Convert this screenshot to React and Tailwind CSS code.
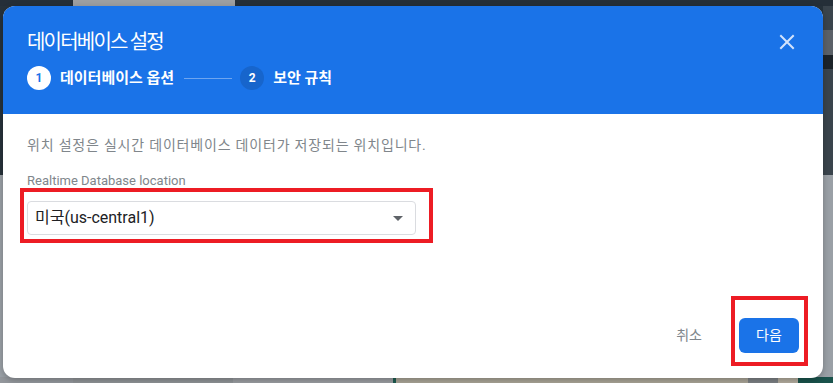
import React from 'react';

const font = { fontFamily: 'Roboto, "Noto Sans CJK KR", sans-serif' };

const Backdrop = () => (
  <div className="flex h-full w-full flex-col">
    <div className="flex h-[6px] bg-[#252f38]">
      <div className="ml-[73px] h-full w-[162px] bg-[#9d9fa1]" />
    </div>
    <div className="flex h-[169px] bg-[#27323a]">
      <div className="flex-1" />
      <div className="flex w-[10px] flex-col">
        <div className="h-[24px] bg-[#3a444c]" />
        <div className="h-[25px] bg-[#5b6168]" />
        <div className="h-[14px] bg-[#1c2329]" />
        <div className="flex-1 bg-[#3a444c]" />
      </div>
    </div>
    <div className="flex flex-1 flex-col bg-[#9aa0a6]">
      <div className="flex-1" />
      <div className="flex h-[6px]">
        <div className="w-[73px] bg-[#93979c]" />
        <div className="w-[160px] bg-[#8e9296]" />
        <div className="w-[160px] bg-[#999ca0]" />
        <div className="w-[3px] bg-[#1c5a4f]" />
        <div className="flex-1 bg-[#a8a396]" />
        <div className="w-[30px] bg-[#7b7f83]" />
        <div className="w-[20px] bg-[#b1aa9c]" />
        <div className="w-[35px] bg-[#19524b]" />
      </div>
    </div>
  </div>
);

const Step = ({ num, label, active }) => (
  <div className="flex items-center gap-[9px]">
    <div
      className={`flex h-6 w-6 items-center justify-center rounded-full text-[12px] font-bold ${
        active ? 'bg-white text-[#1a73e8]' : 'bg-[#1765cc] text-white'
      }`}
    >
      {num}
    </div>
    <span className="text-[15px] font-bold leading-5 text-white">{label}</span>
  </div>
);

export default function App() {
  return (
    <div className="relative h-[383px] w-[833px] overflow-hidden" style={font}>
      <Backdrop />

      <div className="absolute left-[3px] top-[6px] flex h-[372px] w-[820px] flex-col overflow-hidden rounded-[12px] bg-white shadow-[0_2px_6px_rgba(0,0,0,0.25)]">
        <div className="flex h-[108px] flex-col bg-[#1a73e8] pl-[24px] pr-[24px] pt-[22px]">
          <div className="flex items-center justify-between">
            <h1 className="text-[20px] font-normal leading-7 tracking-[-1.8px] text-white">데이터베이스 설정</h1>
            <svg width="16" height="16" viewBox="0 0 16 16" className="mr-[4px]">
              <path d="M2 2L14 14M14 2L2 14" stroke="#d2e3fc" strokeWidth="2" strokeLinecap="square" />
            </svg>
          </div>
          <div className="mt-[10px] flex items-center">
            <Step num="1" label="데이터베이스 옵션" active />
            <div className="ml-[10px] mr-[8px] h-px w-[48px] bg-[#6ea5f0]" />
            <Step num="2" label="보안 규칙" />
          </div>
        </div>

        <div className="flex flex-1 flex-col px-[24px] pt-[21px]">
          <p className="text-[14px] leading-5 tracking-[0.8px] text-[#80868b]">
            위치 설정은 실시간 데이터베이스 데이터가 저장되는 위치입니다.
          </p>
          <label className="mt-[18px] text-[13px] leading-4 text-[#80868b]">Realtime Database location</label>
          <div className="relative mt-[12px] w-[389px]">
            <div className="flex h-[34px] items-center justify-between rounded-[4px] border border-[#dadce0] pl-[7px] pr-[12px]">
              <span className="text-[16px] text-[#202124]">미국(us-central1)</span>
              <svg width="10" height="5" viewBox="0 0 10 5">
                <path d="M0 0L10 0L5 5Z" fill="#5f6368" />
              </svg>
            </div>
            <div className="pointer-events-none absolute -left-[7px] -top-[13px] h-[55px] w-[413px] border-4 border-[#ed1c24]" />
          </div>

          <div className="mt-auto flex items-center justify-end pb-[25px]">
            <button className="mr-[37px] text-[14px] text-[#80868b]">취소</button>
            <div className="relative">
              <button className="h-[35px] w-[60px] rounded-[6px] bg-[#1a73e8] text-[14px] text-white">다음</button>
              <div className="pointer-events-none absolute -left-[8px] -top-[22px] h-[70px] w-[77px] border-4 border-[#ed1c24]" />
            </div>
          </div>
        </div>
      </div>
    </div>
  );
}
